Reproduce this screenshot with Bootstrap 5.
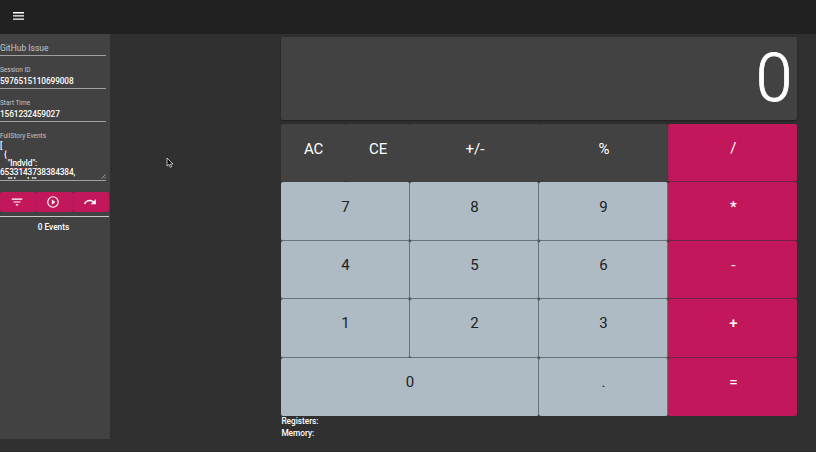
<!DOCTYPE html>
<html lang="en" data-bs-theme="dark">
<head>
<meta charset="utf-8">
<meta name="viewport" content="width=device-width, initial-scale=1">
<title>Calculator</title>
<link href="https://cdn.jsdelivr.net/npm/bootstrap@5.3.0/dist/css/bootstrap.min.css" rel="stylesheet">
<style>
body{background:#303030;color:#fff;font-family:Roboto,sans-serif;font-size:8px;line-height:12px;height:452px}
.topbar{height:34px;background:#212121;padding:0 0 3px 13px;flex:none}
.side{width:110px;height:405px;background:#424242;padding-top:6px;flex:none}
.field{width:106px;border-bottom:1px solid #a0a0a0;white-space:nowrap}
.field label{display:block;font-size:6.500px;line-height:8px;color:#c6c6c6}
.field .val{display:block;font-size:8.300px;letter-spacing:-.12px;font-weight:500;line-height:10px;padding-top:2px}
.issue{height:16px;padding-top:3px;line-height:10px;font-size:8.500px;color:#c6c6c6}
.sess{height:23px;margin-top:10px}
.start{height:23px;margin-top:9.500px}
.events{height:49px;margin-top:10.500px}
.events .json{height:39px;margin:0;overflow:hidden;font:500 8.300px/9px Roboto,sans-serif;letter-spacing:-.12px;white-space:pre;color:#fff;padding-top:1px}
.spell{border-bottom:1px solid #b33}
.grip{right:0;bottom:1px}
.tools{width:109px;margin-top:10.500px}
.tools .btn,.keys .btn{background:#c2185b;color:#fff;border:0;padding:0}
.tools .btn{height:20px;width:36.330px;border-radius:2px;box-shadow:0 0 1px #333}
.tools .btn svg{margin-right:2px}
.rule{width:109px;height:1px;background:#c8c8c8;margin-top:4px}
.count{width:107px;margin-top:4px;font-weight:500;font-size:8.300px}
.calc{width:516px;margin-left:171.400px;padding-top:3px;flex:none}
.display{height:83px;background:#424242;border-radius:2px;box-shadow:0 1px 2px #202020;font-size:66px;font-weight:300;line-height:84px;padding-right:5px;-webkit-text-stroke:.8px #fff}
.keys{display:grid;grid-template-columns:repeat(8,64.500px);grid-template-rows:repeat(5,58.400px);margin-top:4px}
.keys .btn{grid-column:span 2;border-radius:2px;font-size:15px;line-height:49px;font-weight:400;padding:0 0 8px;box-shadow:0 0 1px #303030}
.keys .num{background:#aebbc4;color:#212121;border-right:1px solid #737b80;border-bottom:1px solid #737b80}
.keys .fn{background:#424242;box-shadow:none}
.keys .half{grid-column:span 1}
.keys .zero{grid-column:span 4}
.keys .op{border-left:1px solid #a02758;border-bottom:1px solid #7c2148}
.keys .bold{font-weight:500}
.keys .last{border-bottom:0}
.cursor{left:166px;top:157px}
.status{font-weight:500;font-size:8.300px;letter-spacing:-.03px;line-height:11.800px}
.bottomline{height:1px;background:#2a2a2a}
</style>
</head>
<body class="d-flex flex-column overflow-hidden position-relative">
<nav class="topbar d-flex align-items-center">
<svg width="11" height="8" viewBox="0 0 11 8" fill="#fff"><path d="M0 0h11v1.400H0zM0 3.200h11v1.400H0zM0 6.400h11v1.400H0z"/></svg>
</nav>
<main class="d-flex flex-grow-1">
<aside class="side">
<div class="field issue">GitHub Issue</div>
<div class="field sess"><label>Session ID</label><span class="val">5976515110699008</span></div>
<div class="field start"><label>Start Time</label><span class="val">1561232459027</span></div>
<div class="field events position-relative"><label>FullStory Events</label><pre class="json">[
  {
    "<span class="spell">IndvId</span>":
6533143738384384,
    "UserId":</pre>
<svg class="grip position-absolute" width="5" height="5" viewBox="0 0 5 5" stroke="#bbb" stroke-width=".7"><path d="M.5 4.500l4-4M3 4.500L4.500 3"/></svg></div>
<div class="tools d-flex">
<button class="btn d-flex align-items-center justify-content-center" aria-label="Filter"><svg width="14" height="14" viewBox="0 0 24 24" fill="#fff"><path d="M10 18h4v-2h-4v2zM3 6v2h18V6H3zm3 7h12v-2H6v2z"/></svg></button>
<button class="btn d-flex align-items-center justify-content-center" aria-label="Play"><svg width="14" height="14" viewBox="0 0 24 24" fill="#fff"><path d="M10 16.500l6-4.500-6-4.500v9zM12 2a10 10 0 1 0 0 20 10 10 0 0 0 0-20zm0 18a8 8 0 1 1 0-16 8 8 0 0 1 0 16z"/></svg></button>
<button class="btn d-flex align-items-center justify-content-center" aria-label="Step"><svg width="14" height="14" viewBox="0 0 24 24" fill="#fff"><path d="M18.400 10.600C16.550 8.990 14.150 8 11.500 8c-4.650 0-8.580 3.030-9.960 7.220L3.900 16a8.002 8.002 0 0 1 7.600-5.500c1.950 0 3.730.72 5.120 1.880L13 16h9V7l-3.600 3.600z"/></svg></button>
</div>
<div class="rule"></div>
<div class="count text-center">0 Events</div>
</aside>
<section class="calc">
<div class="display text-end">0</div>
<div class="keys">
<button class="btn fn half">AC</button><button class="btn fn half">CE</button><button class="btn fn">+/-</button><button class="btn fn">%</button><button class="btn op">/</button>
<button class="btn num">7</button><button class="btn num">8</button><button class="btn num">9</button><button class="btn op bold">*</button>
<button class="btn num">4</button><button class="btn num">5</button><button class="btn num">6</button><button class="btn op">-</button>
<button class="btn num">1</button><button class="btn num">2</button><button class="btn num">3</button><button class="btn op bold">+</button>
<button class="btn num zero last">0</button><button class="btn num last">.</button><button class="btn op bold last">=</button>
</div>
<div class="status">Registers:<br>Memory:</div>
</section>
</main>
<footer class="bottomline"></footer>
<svg class="cursor position-absolute" width="8" height="11" viewBox="0 0 8 11"><path d="M1 1v8l2-1.600L4.200 10.300l1.400-.6L4.500 7H7z" fill="#111" stroke="#ddd" stroke-width=".8"/></svg>
<script src="https://cdn.jsdelivr.net/npm/bootstrap@5.3.0/dist/js/bootstrap.bundle.min.js"></script>
</body>
</html>
